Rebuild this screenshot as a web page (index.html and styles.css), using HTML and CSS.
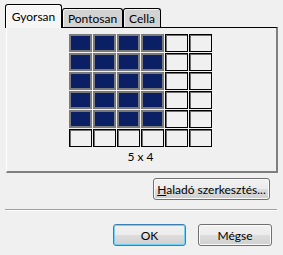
FILE: index.html
```html
<!DOCTYPE html>
<html lang="hu">
<head>
    <meta charset="UTF-8">
    <title>Táblázat beszúrása</title>
    <link rel="stylesheet" href="styles.css">
</head>
<body>
    <div class="dialog">
        <!-- Fülek -->
        <div class="tabs">
            <div class="tab active">Gyorsan</div>
            <div class="tab">Pontosan</div>
            <div class="tab narrow">Cella</div>
        </div>

        <!-- Fül tartalma: rács -->
        <div class="panel">
            <div class="grid">
                <div class="cell on"></div><div class="cell on"></div><div class="cell on"></div><div class="cell on"></div><div class="cell"></div><div class="cell"></div>
                <div class="cell on"></div><div class="cell on"></div><div class="cell on"></div><div class="cell on"></div><div class="cell"></div><div class="cell"></div>
                <div class="cell on"></div><div class="cell on"></div><div class="cell on"></div><div class="cell on"></div><div class="cell"></div><div class="cell"></div>
                <div class="cell on"></div><div class="cell on"></div><div class="cell on"></div><div class="cell on"></div><div class="cell"></div><div class="cell"></div>
                <div class="cell on"></div><div class="cell on"></div><div class="cell on"></div><div class="cell on"></div><div class="cell"></div><div class="cell"></div>
                <div class="cell"></div><div class="cell"></div><div class="cell"></div><div class="cell"></div><div class="cell"></div><div class="cell"></div>
            </div>
            <div class="size">5 x 4</div>
        </div>

        <div class="row advanced">
            <button class="btn wide"><u>H</u>aladó szerkesztés...</button>
        </div>

        <div class="separator"></div>

        <div class="row footer">
            <button class="btn default">OK</button>
            <button class="btn">Mégse</button>
        </div>
    </div>
</body>
</html>
```

FILE: styles.css
```css
/* Ablak alapja */
body {
    margin: 0;
    background: #f0f0f0;
    font-family: Lato, "Noto Sans", sans-serif;
    font-size: 12px;
    color: #000;
}

.dialog {
    width: 283px;
    height: 255px;
}

/* Fülek sora */
.tabs {
    display: flex;
    align-items: flex-end;
    padding: 4px 0 0 5px;
    margin-bottom: -1px;
}

.tab {
    width: 61px;
    height: 19px;
    margin-bottom: 1px;
    box-sizing: border-box;
    border: 1px solid #000;
    border-bottom: none;
    border-radius: 3px 3px 0 0;
    background: #d2d2d2;
    box-shadow: inset 1px 1px #f4f4f4;
    display: flex;
    align-items: center;
    justify-content: center;
    padding-top: 1px;
}

.tab.narrow {
    width: 38px;
}

.tab.active {
    width: 57px;
    height: 24px;
    margin-bottom: 0;
    background: #f6f6f6;
    box-shadow: inset 1px 1px #ffffff;
    position: relative;
    z-index: 1;
    padding-bottom: 2px;
}

/* Fül tartalma */
.panel {
    margin-left: 6px;
    width: 272px;
    height: 146px;
    box-sizing: border-box;
    border-top: 1px solid #000;
    border-left: 1px solid #fdfdfd;
    border-right: 2px solid #808080;
    border-bottom: 2px solid #808080;
    padding-top: 6px;
    display: flex;
    flex-direction: column;
    align-items: center;
}

.grid {
    display: grid;
    grid-template-columns: repeat(6, 23px);
    grid-template-rows: repeat(6, 18px);
    gap: 1px;
    margin-left: -2px;
}

.cell {
    box-sizing: border-box;
    border: 1px solid #000;
    background: #f0f0f0;
    box-shadow: inset 1px 1px #6e6e6e;
}

.cell.on {
    border: 2px solid #7a7a7a;
    background: #0b2064;
    box-shadow: none;
}

.size {
    margin-top: 2px;
    margin-left: -2px;
    line-height: 16px;
}

/* Gombok */
.row {
    display: flex;
    justify-content: flex-end;
}

.advanced {
    padding: 5px 13px 0 0;
}

.footer {
    gap: 12px;
    padding-right: 11px;
    margin-top: 13px;
}

.btn {
    height: 22px;
    width: 74px;
    font: inherit;
    color: #000;
    border: 1px solid #707070;
    border-radius: 3px;
    background: linear-gradient(#f2f2f2 0%, #ebebeb 50%, #dddddd 51%, #cfcfcf 100%);
    box-shadow: inset 0 0 0 1px #fbfbfb;
    padding: 0;
}

.btn.wide {
    width: 117px;
}

.btn.default {
    width: 73px;
    border-color: #3c7fb1;
    box-shadow: inset 0 0 0 1px #6fd2f7;
}

.separator {
    margin: 9px 6px 0 5px;
    height: 1px;
    background: #a0a0a0;
    border-bottom: 1px solid #ffffff;
}
```
